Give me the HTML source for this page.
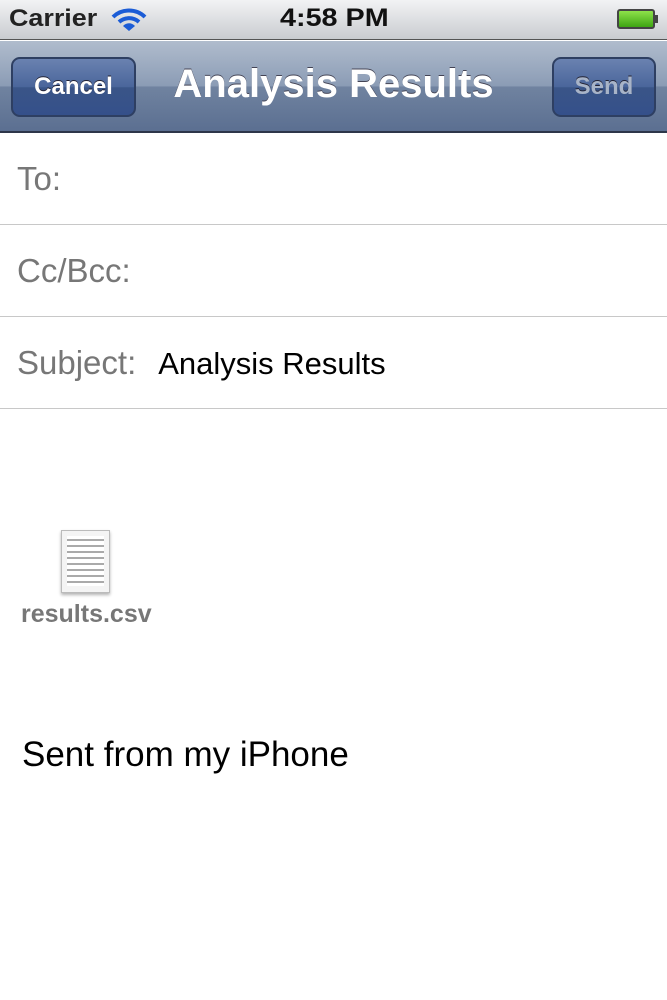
<!DOCTYPE html>
<html><head><style>
*{margin:0;padding:0;box-sizing:border-box}
body{width:667px;height:1000px;background:#fff;font-family:"Liberation Sans",sans-serif;position:relative;overflow:hidden}
.sb{position:absolute;left:0;top:0;width:667px;height:40px;background:linear-gradient(#f2f3f4,#c9ccd0);border-bottom:1px solid #555}
.nav{position:absolute;left:0;top:41px;width:667px;height:92px;background:linear-gradient(#b0bccd 0%,#8b9cb5 50%,#7083a0 51%,#5b6f91 100%);border-bottom:2px solid #2d3649}
.btn{position:absolute;top:16px;height:60px;border-radius:9px;border:2px solid #2e3f62;background:linear-gradient(#6a82b0 0%,#4a669b 50%,#3a5588 51%,#35508a 100%);color:#fff;font-weight:bold;font-size:24px;text-align:center;line-height:56px;text-shadow:0 -1px 0 #223}
.row{position:absolute;left:0;width:667px;height:92px;border-bottom:1.5px solid #c8c8c8;font-size:33px;color:#777;padding-left:17px;line-height:92px}
</style></head><body>
<div class="sb">
<div style="position:absolute;left:9px;top:5px;font-size:24px;font-weight:bold;color:#222;transform:scaleX(1.12);transform-origin:left">Carrier</div>
<svg style="position:absolute;left:111px;top:8px" width="36" height="24" viewBox="0 0 36 24"><path d="M2 9 A23 23 0 0 1 34 9" stroke="#1b5cd6" stroke-width="4" fill="none"/><path d="M8 14 A15 15 0 0 1 28 14" stroke="#1b5cd6" stroke-width="4" fill="none"/><path d="M18 23 L12 18 A8 8 0 0 1 24 18Z" fill="#1b5cd6"/></svg>
<div style="position:absolute;left:280px;top:4px;font-size:25px;font-weight:bold;color:#111;transform:scaleX(1.15);transform-origin:left">4:58 PM</div>
<div style="position:absolute;left:617px;top:9px;width:38px;height:20px;border:2px solid #444;border-radius:3px;background:linear-gradient(#8ee24a,#3ea512)"></div>
<div style="position:absolute;left:655px;top:15px;width:3px;height:8px;background:#444"></div>
</div>
<div class="nav">
<div class="btn" style="left:11px;width:125px">Cancel</div>
<div style="position:absolute;left:0;width:667px;top:21px;text-align:center;font-size:40px;font-weight:bold;color:#fff;text-shadow:0 -1px 0 #445">Analysis Results</div>
<div class="btn" style="left:552px;width:104px;color:#a8b4c8">Send</div>
</div>
<div class="row" style="top:133px">To:</div>
<div class="row" style="top:225px">Cc/Bcc:</div>
<div class="row" style="top:317px">Subject:<span style="color:#000;font-size:31px;margin-left:22px">Analysis Results</span></div>
<div style="position:absolute;left:61px;top:530px;width:49px;height:63px;background:#f4f4f4;border:1px solid #bbb;box-shadow:0 2px 3px rgba(0,0,0,.3)">
<div style="margin:5px 5px;height:50px;background:repeating-linear-gradient(#fff 0 3px,#aaa 3px 5px,#fff 5px 6px)"></div></div>
<div style="position:absolute;left:21px;top:600px;font-size:25px;font-weight:bold;color:#777">results.csv</div>
<div style="position:absolute;left:22px;top:735px;font-size:35px;color:#000">Sent from my iPhone</div>
</body></html>
